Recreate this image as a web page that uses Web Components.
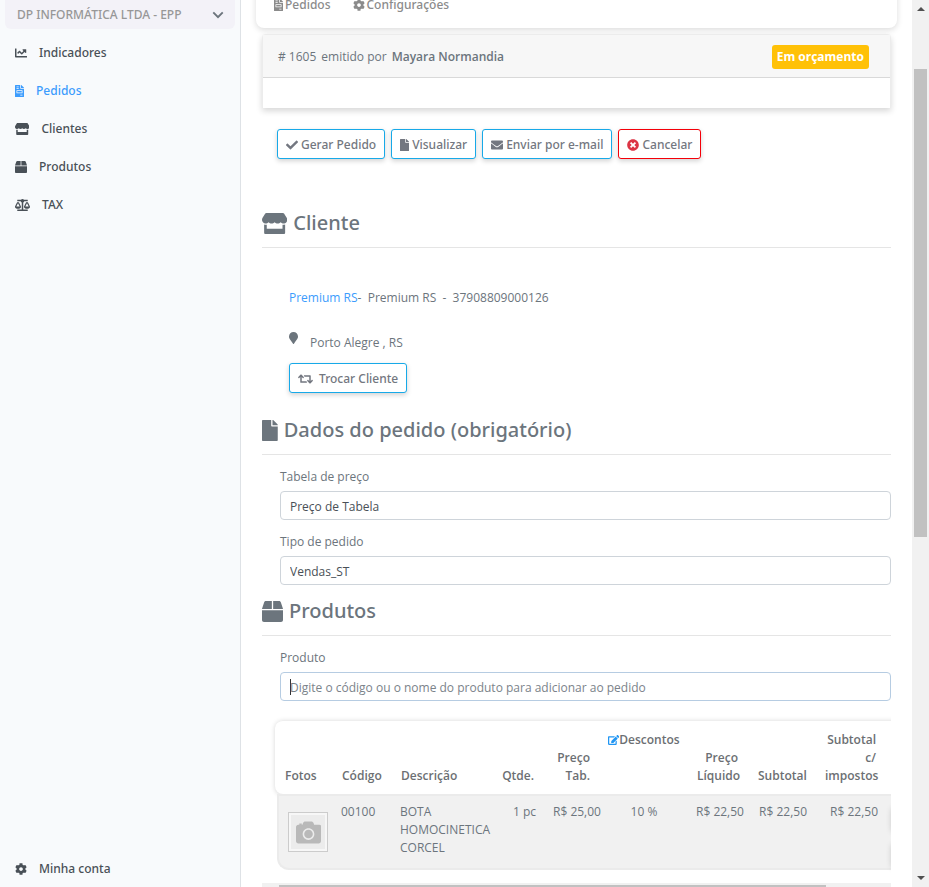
<!DOCTYPE html>
<html lang="pt-BR">
<head>
<meta charset="utf-8">
<meta name="viewport" content="width=device-width, initial-scale=1">
<title>Pedido 1605</title>
<style>
body { margin: 0; background: #fff; color: #6c757d; font: 12px/18px "Open Sans", "Noto Sans", sans-serif; --medium: "Noto Sans", "Open Sans", sans-serif; }
</style>
</head>
<body>
<order-app></order-app>
<script>
const define = (name, html, setup) => {
  const tpl = document.createElement('template');
  tpl.innerHTML = '<style>*,*::before{box-sizing:border-box}button,input{font-family:inherit}</style>' + html;
  customElements.define(name, class extends HTMLElement {
    constructor() {
      super();
      this.attachShadow({ mode: 'open' }).append(tpl.content.cloneNode(true));
    }
    connectedCallback() { if (setup) setup(this, this.shadowRoot); }
  });
};

const ICONS = {
  chart: [512, 'M496 384H64V80c0-8.84-7.16-16-16-16H16C7.16 64 0 71.16 0 80v336c0 17.67 14.33 32 32 32h464c8.84 0 16-7.16 16-16v-32c0-8.84-7.16-16-16-16zM464 96H345.94c-21.38 0-32.09 25.85-16.97 40.97l32.4 32.4L288 242.75l-73.37-73.37c-12.5-12.5-32.76-12.5-45.25 0l-68.69 68.69c-6.25 6.25-6.25 16.38 0 22.63l22.62 22.62c6.25 6.25 16.38 6.25 22.63 0L192 237.25l73.37 73.37c12.5 12.5 32.76 12.5 45.25 0l96-96 32.4 32.4c15.12 15.12 40.97 4.41 40.97-16.97V112c.01-8.84-7.15-16-15.99-16z'],
  invoice: [384, 'M288 256H96v64h192v-64zm89-151L279.1 7c-4.5-4.5-10.6-7-17-7H256v128h128v-6.1c0-6.3-2.5-12.4-7-16.9zm-153 31V0H24C10.7 0 0 10.7 0 24v464c0 13.3 10.7 24 24 24h336c13.3 0 24-10.7 24-24V160H248c-13.2 0-24-10.8-24-24zM64 72c0-4.42 3.58-8 8-8h80c4.42 0 8 3.58 8 8v16c0 4.42-3.58 8-8 8H72c-4.42 0-8-3.58-8-8V72zm0 64c0-4.42 3.58-8 8-8h80c4.42 0 8 3.58 8 8v16c0 4.42-3.58 8-8 8H72c-4.42 0-8-3.58-8-8v-16zm256 304c0 4.42-3.58 8-8 8h-80c-4.42 0-8-3.58-8-8v-16c0-4.42 3.58-8 8-8h80c4.42 0 8 3.58 8 8v16zm0-200v96c0 8.84-7.16 16-16 16H80c-8.84 0-16-7.16-16-16v-96c0-8.84 7.16-16 16-16h224c8.84 0 16 7.16 16 16z'],
  store: [616, 'M602 118.6L537.1 15C531.3 5.7 521 0 510 0H106C95 0 84.7 5.7 78.9 15L14 118.6c-33.5 53.5-3.8 127.9 58.8 136.4 4.5.6 9.1.9 13.7.9 29.6 0 55.8-13 73.8-33.1 18 20.1 44.3 33.1 73.8 33.1 29.6 0 55.8-13 73.8-33.1 18 20.1 44.3 33.1 73.8 33.1 29.6 0 55.8-13 73.8-33.1 18.1 20.1 44.3 33.1 73.8 33.1 4.7 0 9.2-.3 13.7-.9 62.8-8.4 92.6-82.8 59-136.4zM529.5 288c-10 0-19.9-1.5-29.5-3.8V384H116v-99.8c-9.6 2.2-19.5 3.8-29.5 3.8-6 0-12.1-.4-18-1.2-5.6-.8-11.1-2.1-16.4-3.6V480c0 17.7 14.3 32 32 32h448c17.7 0 32-14.3 32-32V283.2c-5.4 1.6-10.8 2.9-16.4 3.6-6.1.8-12.1 1.2-18.2 1.2z'],
  box: [512, 'M509.5 184.6L458.9 32.8C452.4 13.2 434.1 0 413.4 0H272v192h238.7c-.4-2.5-.4-5-1.2-7.4zM240 0H98.6c-20.7 0-39 13.2-45.5 32.8L2.5 184.6c-.8 2.4-.8 4.9-1.2 7.4H240V0zM0 224v240c0 26.5 21.5 48 48 48h416c26.5 0 48-21.5 48-48V224H0z'],
  scale: [640, 'M256 336h-.02c0-16.18 1.34-8.73-85.05-181.51-17.65-35.29-68.19-35.36-85.87 0C-2.06 328.75.02 320.33.02 336H0c0 44.18 57.31 80 128 80s128-35.82 128-80zM128 176l72 144H56l72-144zm511.98 160c0-16.18 1.34-8.73-85.05-181.51-17.65-35.29-68.19-35.36-85.87 0-87.12 174.26-85.04 165.84-85.04 181.51H384c0 44.18 57.31 80 128 80s128-35.82 128-80h-.02zM440 320l72-144 72 144H440zm88 128H352V153.25c23.51-10.29 41.16-31.48 46.39-57.25H528c8.84 0 16-7.16 16-16V48c0-8.84-7.16-16-16-16H383.64C369.04 12.68 346.09 0 320 0s-49.04 12.68-63.64 32H112c-8.84 0-16 7.16-16 16v32c0 8.84 7.16 16 16 16h129.61c5.23 25.76 22.87 46.96 46.39 57.25V448H112c-8.84 0-16 7.16-16 16v32c0 8.84 7.16 16 16 16h416c8.84 0 16-7.16 16-16v-32c0-8.84-7.16-16-16-16z'],
  cog: [512, 'M487.4 315.7l-42.6-24.6c4.3-23.2 4.3-47 0-70.2l42.6-24.6c4.9-2.8 7.1-8.6 5.5-14-11.1-35.6-30-67.8-54.7-94.6-3.8-4.1-10-5.1-14.8-2.3L380.8 110c-17.9-15.4-38.5-27.3-60.8-35.1V25.8c0-5.6-3.9-10.5-9.4-11.7-36.7-8.2-74.3-7.8-109.2 0-5.5 1.2-9.4 6.1-9.4 11.7V75c-22.2 7.9-42.8 19.8-60.8 35.1L88.7 85.5c-4.9-2.8-11-1.9-14.8 2.3-24.7 26.7-43.6 58.9-54.7 94.6-1.7 5.4.6 11.2 5.5 14L67.3 221c-4.3 23.2-4.3 47 0 70.2l-42.6 24.6c-4.9 2.8-7.1 8.6-5.5 14 11.1 35.6 30 67.8 54.7 94.6 3.8 4.1 10 5.1 14.8 2.3l42.6-24.6c17.9 15.4 38.5 27.3 60.8 35.1v49.2c0 5.6 3.9 10.5 9.4 11.7 36.7 8.2 74.3 7.8 109.2 0 5.5-1.2 9.4-6.1 9.4-11.7v-49.2c22.2-7.9 42.8-19.8 60.8-35.1l42.6 24.6c4.9 2.8 11 1.9 14.8-2.3 24.7-26.7 43.6-58.9 54.7-94.6 1.5-5.5-.7-11.3-5.6-14.1zM256 336c-44.1 0-80-35.9-80-80s35.9-80 80-80 80 35.9 80 80-35.9 80-80 80z'],
  check: [512, 'M173.9 439.4l-166.4-166.4c-10-10-10-26.2 0-36.2l36.2-36.2c10-10 26.2-10 36.2 0L192 312.7 432.1 72.6c10-10 26.2-10 36.2 0l36.2 36.2c10 10 10 26.2 0 36.2l-294.4 294.4c-10 10-26.2 10-36.2 0z'],
  file: [384, 'M224 136V0H24C10.7 0 0 10.7 0 24v464c0 13.3 10.7 24 24 24h336c13.3 0 24-10.7 24-24V160H248c-13.2 0-24-10.8-24-24zm160-14.1v6.1H256V0h6.1c6.4 0 12.5 2.5 17 7l97.9 98c4.5 4.5 7 10.6 7 16.9z'],
  envelope: [512, 'M502.3 190.8c3.9-3.1 9.7-.2 9.7 4.7V400c0 26.5-21.5 48-48 48H48c-26.5 0-48-21.5-48-48V195.6c0-5 5.7-7.8 9.7-4.7 22.4 17.4 52.1 39.5 154.1 113.6 21.1 15.4 56.7 47.8 92.2 47.6 35.7.3 72-32.8 92.3-47.6 102-74.1 131.6-96.3 154-113.7zM256 320c23.2.4 56.6-29.2 73.4-41.4 132.7-96.3 142.8-104.7 173.4-128.7 5.8-4.5 9.2-11.5 9.2-18.9v-19c0-26.5-21.5-48-48-48H48c-26.5 0-48 21.5-48 48v19c0 7.4 3.4 14.3 9.2 18.9 30.6 23.9 40.7 32.4 173.4 128.7 16.8 12.2 50.2 41.8 73.4 41.4z'],
  cancel: [512, 'M256 8C119 8 8 119 8 256s111 248 248 248 248-111 248-248S393 8 256 8zm121.6 313.1c4.7 4.7 4.7 12.3 0 17L338 377.6c-4.7 4.7-12.3 4.7-17 0L256 312l-65.1 65.6c-4.7 4.7-12.3 4.7-17 0L134.4 338c-4.7-4.7-4.7-12.3 0-17l65.6-65-65.6-65.1c-4.7-4.7-4.7-12.3 0-17l39.6-39.6c4.7-4.7 12.3-4.7 17 0l65 65.7 65.1-65.6c4.7-4.7 12.3-4.7 17 0l39.6 39.6c4.7 4.7 4.7 12.3 0 17L312 256l65.6 65.1z'],
  marker: [384, 'M172.3 501.7C27 291 0 269.4 0 192 0 86 86 0 192 0s192 86 192 192c0 77.4-27 99-172.3 309.7-9.5 13.8-29.9 13.8-39.4 0z'],
  retweet: [640, 'M629.657 343.598L528.971 444.284c-9.373 9.372-24.568 9.372-33.941 0L394.343 343.598c-9.373-9.373-9.373-24.569 0-33.941l10.823-10.823c9.562-9.562 25.133-9.34 34.419.492L480 342.118V160H292.451a24.005 24.005 0 0 1-16.971-7.029l-16-16C244.361 121.851 255.069 96 276.451 96H520c13.255 0 24 10.745 24 24v222.118l40.416-42.792c9.285-9.831 24.856-10.054 34.419-.492l10.823 10.823c9.372 9.372 9.372 24.569-.001 33.941zm-265.138 15.431A23.999 23.999 0 0 0 347.548 352H160V169.881l40.416 42.792c9.286 9.831 24.856 10.054 34.419.491l10.822-10.822c9.373-9.373 9.373-24.569 0-33.941L144.971 67.716c-9.373-9.373-24.569-9.373-33.941 0L10.343 168.402c-9.373 9.373-9.373 24.569 0 33.941l10.822 10.822c9.562 9.562 25.133 9.34 34.419-.491L96 169.881V392c0 13.255 10.745 24 24 24h243.549c21.382 0 32.09-25.851 16.971-40.971l-16.001-16z'],
  edit: [576, 'M402.6 83.2l90.2 90.2c3.8 3.8 3.8 10 0 13.8L274.4 405.6l-92.8 10.3c-12.4 1.4-22.9-9.1-21.5-21.5l10.3-92.8L388.8 83.2c3.8-3.8 10-3.8 13.8 0zm162-22.9l-48.8-48.8c-15.2-15.2-39.9-15.2-55.2 0l-35.4 35.4c-3.8 3.8-3.8 10 0 13.8l90.2 90.2c3.8 3.8 10 3.8 13.8 0l35.4-35.4c15.2-15.3 15.2-40 0-55.2zM384 346.2V448H64V128h229.8c3.2 0 6.2-1.3 8.5-3.5l40-40c7.6-7.6 2.2-20.5-8.5-20.5H48C21.5 64 0 85.5 0 112v352c0 26.5 21.5 48 48 48h352c26.5 0 48-21.5 48-48V306.2c0-10.7-12.9-16-20.5-8.5l-40 40c-2.2 2.3-3.5 5.3-3.5 8.5z'],
  down: [512, 'M256 404L26 174l56-56 174 174 174-174 56 56z'],
  camera: [512, 'M512 144v288c0 26.500-21.500 48-48 48H48c-26.500 0-48-21.500-48-48V144c0-26.500 21.500-48 48-48h20V70h50v26h14l12-33c7-19 25-31 45-31h125c20 0 38 12 45 31l12 33h105c26.500 0 48 21.500 48 48zM376 288c0-66-54-120-120-120s-120 54-120 120 54 120 120 120 120-54 120-120zm-32 0c0 48.500-39.500 88-88 88s-88-39.500-88-88 39.500-88 88-88 88 39.500 88 88z']
};

define('app-icon', `
<style>:host{display:inline-flex;flex:none;height:var(--icon-size,12px)}svg{display:block;height:100%;fill:currentColor}</style>
<svg aria-hidden="true"><path/></svg>`, (el, root) => {
  const [w, d] = ICONS[el.getAttribute('name')];
  root.querySelector('svg').setAttribute('viewBox', `0 0 ${w} 512`);
  root.querySelector('svg').style.aspectRatio = w + '/512';
  root.querySelector('path').setAttribute('d', d);
});

define('side-link', `
<style>
:host{display:block;--icon-size:12px}
a{display:flex;align-items:center;gap:12px;padding:9px 15px;color:#495057;font-family:var(--medium);font-size:12px;line-height:20px;font-weight:500;text-decoration:none}
:host([active]) a{color:#3c9cfd}
</style>
<a href="#"><slot></slot></a>`, (el, root) => {
  const icon = document.createElement('app-icon');
  icon.setAttribute('name', el.getAttribute('icon'));
  root.querySelector('a').prepend(icon);
});

define('side-bar', `
<style>
:host{display:flex;flex-direction:column;flex:none;width:241px;background:#f8fafc;border-right:1px solid #dee2e6}
.company{display:flex;justify-content:space-between;align-items:center;margin:0 5px 5px;padding:0 11px 0 12px;height:29px;border:0;border-radius:0 0 6px 6px;background:#f3f2f8;color:#979797;font-family:var(--medium);font-size:12px;line-height:18px;font-weight:500}
.company app-icon{color:#6c757d}
nav{flex:1;display:flex;flex-direction:column}
.account{margin-top:auto;margin-bottom:-1px}
</style>
<button class="company">DP INFORMÁTICA LTDA - EPP<app-icon name="down"></app-icon></button>
<nav>
<side-link icon="chart">Indicadores</side-link>
<side-link icon="invoice" active>Pedidos</side-link>
<side-link icon="store">Clientes</side-link>
<side-link icon="box">Produtos</side-link>
<side-link icon="scale">TAX</side-link>
<side-link class="account" icon="cog">Minha conta</side-link>
</nav>`);

define('top-tabs', `
<style>
:host{display:flex;gap:22px;margin:0 -6px;padding:23px 18px 17px;background:#fff;border-radius:8px;box-shadow:0 2px 6px rgba(0,0,0,.14)}
a{display:flex;align-items:center;gap:2px;color:#8b8b8b;font-family:var(--medium);line-height:12px;font-weight:500;text-decoration:none}
</style>
<a href="#"><app-icon name="invoice"></app-icon>Pedidos</a>
<a href="#"><app-icon name="cog"></app-icon>Configurações</a>`);

define('order-card', `
<style>
:host{display:block;margin-top:6px;border:1px solid #ececec;border-bottom:0;border-radius:4px 4px 0 0;box-shadow:0 3px 6px rgba(0,0,0,.16)}
header{display:flex;align-items:center;gap:5px;height:43px;padding:1px 21px 0 15px;background:#f7f7f7;border-bottom:1px solid #d9d9d9}
.badge{margin-left:auto;padding:3px 5px;border-radius:3px;background:#ffc107;color:#fff;font-weight:700}
.body{height:30px}
b{font-weight:600}
</style>
<header><span># 1605</span><span>emitido por</span><b>Mayara Normandia</b><span class="badge">Em orçamento</span></header>
<div class="body"></div>`);

define('action-button', `
<style>
:host{display:inline-flex}
button{display:flex;align-items:center;gap:var(--button-gap,3px);height:30px;padding:1px 8px 0;border:1px solid #17a9e8;border-radius:3px;background:#fff;color:#737780;font-family:var(--medium);font-size:12px;line-height:18px;font-weight:500;white-space:nowrap;box-shadow:0 2px 5px rgba(0,0,0,.18)}
:host([danger]) button{border-color:#f40009}
</style>
<button><slot name="icon"></slot><slot></slot></button>`);

define('section-title', `
<style>
:host{display:block;border-bottom:1px solid #e5e5e5;--icon-size:21px}
h2{display:flex;align-items:center;gap:6px;margin:0;padding-bottom:10px;font-family:var(--medium);font-size:20px;line-height:28px;font-weight:500}
</style>
<h2><slot name="icon"></slot><slot></slot></h2>`);

define('form-field', `
<style>
:host{display:block;padding-left:18px}
label{display:block;margin-bottom:5px}
input{display:block;width:100%;height:29px;padding:2px 9px 0;border:1px solid #ced4da;border-radius:4px;background:#fff;color:#495057;font-size:12px;line-height:18px}
input::placeholder{color:#7b838a;opacity:1}
:host([active]) input{border-color:#b6cce2;background:linear-gradient(#333,#333) 9px center/1px 16px no-repeat #fff}
</style>
<label for="field"></label><input id="field" type="text">`, (el, root) => {
  root.querySelector('label').textContent = el.getAttribute('label');
  const input = root.querySelector('input');
  input.value = el.getAttribute('value') || '';
  input.placeholder = el.getAttribute('placeholder') || '';
});

define('client-info', `
<style>
:host{display:flex;flex-direction:column;align-items:flex-start;padding:41px 0 0 27px}
p{margin:0}
.name{white-space:pre}
a{color:#3c9cfd;text-decoration:none}
.place{display:flex;gap:12px;padding:25px 0 11px}
.place span{padding-top:2px}
</style>
<p class="name"><a href="#">Premium RS</a>-&nbsp; Premium RS&nbsp; -&nbsp; 37908809000126</p>
<p class="place"><app-icon name="marker"></app-icon><span>Porto Alegre , RS</span></p>
<action-button style="--button-gap:6px"><app-icon slot="icon" name="retweet"></app-icon>Trocar Cliente</action-button>`);

define('product-table', `
<style>
:host{display:block;margin:15px 0 0 3px;padding:4px 0 9px 10px;overflow:hidden}
table{width:calc(100% + 35px);table-layout:fixed;border-collapse:separate;border-spacing:0}
thead{border-radius:8px 0 0 8px;box-shadow:0 1px 5px rgba(0,0,0,.16)}
th{padding:10px 10px 9px;vertical-align:bottom;font-weight:600;text-align:left;color:#6c6f73;border-top:1px solid #eee;white-space:nowrap}
th:first-child{border-radius:8px 0 0 8px}
.n{text-align:right}
.d{text-align:center}
th.d{vertical-align:top;padding-left:8px}
th.d span{display:flex;align-items:center;--icon-size:10px}
th.d app-icon{color:#2196f3}
td{height:76px;padding:7px 8px 0 9px;vertical-align:top;background:#f1f1f1;border:solid #ebebeb;border-width:2px 0;white-space:nowrap}
td:first-child{position:relative;background:none;border:0}
td:first-child::before{content:"";position:absolute;inset:0 0 0 2px;background:#f1f1f1;border:2px solid #ebebeb;border-right:0;border-radius:0 0 0 12px}
td.wrap{white-space:normal}
.photo{position:relative;display:flex;align-items:center;justify-content:center;width:40px;height:40px;margin:11px 0 0 4px;border:1px solid #ccc;box-shadow:inset 0 0 0 2px #f7f7f7;background:#ececec;color:#b9b9b9;--icon-size:25px}
td.tools{padding:10px 0 0 6px}
.tools button{display:block;width:24px;height:24px;border:0;border-radius:3px;background:#fff;box-shadow:0 2px 6px rgba(0,0,0,.2)}
.tools button + button{margin-top:12px}
</style>
<table>
<colgroup><col style="width:57px"><col style="width:59px"><col><col style="width:52px"><col style="width:56px"><col style="width:87px"><col style="width:61px"><col style="width:67px"><col style="width:71px"><col style="width:40px"></colgroup>
<thead><tr><th>Fotos</th><th>Código</th><th>Descrição</th><th class="n">Qtde.</th><th class="n">Preço<br>Tab.</th><th class="d"><span><app-icon name="edit"></app-icon>Descontos</span></th><th class="n">Preço<br>Líquido</th><th class="n">Subtotal</th><th class="n">Subtotal<br>c/<br>impostos</th><th></th></tr></thead>
<tbody><tr><td><div class="photo"><app-icon name="camera"></app-icon></div></td><td>00100</td><td class="wrap">BOTA HOMOCINETICA CORCEL</td><td class="n">1 pc</td><td class="n">R$ 25,00</td><td class="d">10 %</td><td class="n">R$ 22,50</td><td class="n">R$ 22,50</td><td class="n">R$ 22,50</td><td class="tools"><button aria-label="Editar"></button><button aria-label="Remover"></button></td></tr></tbody>
</table>`);

define('h-scroll', `
<style>:host{display:block;height:17px;margin-top:4px;padding:2px 17px;background:#f1f1f1}div{width:92%;height:13px;background:#c1c1c1}</style><div></div>`);

define('page-scroll', `
<style>
:host{display:flex;flex-direction:column;align-items:center;flex:none;width:17px;padding:7px 2px;background:#f1f1f1}
i{border:4px solid transparent;border-top:0;border-bottom-color:#505050}
i.down{border:4px solid transparent;border-bottom:0;border-top-color:#505050;margin-top:auto}
.track{width:13px;height:calc(53% + 5px);margin-top:58px;background:#c1c1c1}
</style><i></i><div class="track"></div><i class="down"></i>`);

define('order-app', `
<style>
:host{display:flex;height:100vh;overflow:hidden}
main{flex:1;min-width:0;padding:0 21px;overflow:hidden;position:relative;z-index:0}
top-tabs{margin-top:-24px}
.actions{display:flex;gap:6px;padding:21px 15px 50px}
.s2{margin-top:23px}
.s3{margin-top:12px}
form-field{margin-top:13px}
</style>
<side-bar></side-bar>
<main>
<top-tabs></top-tabs>
<order-card></order-card>
<div class="actions">
<action-button><app-icon slot="icon" name="check"></app-icon>Gerar Pedido</action-button>
<action-button><app-icon slot="icon" name="file"></app-icon>Visualizar</action-button>
<action-button><app-icon slot="icon" name="envelope"></app-icon>Enviar por e-mail</action-button>
<action-button danger><app-icon slot="icon" name="cancel" style="color:#dc3545"></app-icon>Cancelar</action-button>
</div>
<section-title><app-icon slot="icon" name="store"></app-icon>Cliente</section-title>
<client-info></client-info>
<section-title class="s2"><app-icon slot="icon" name="file"></app-icon>Dados do pedido (obrigatório)</section-title>
<form-field label="Tabela de preço" value="Preço de Tabela"></form-field>
<form-field label="Tipo de pedido" value="Vendas_ST"></form-field>
<section-title class="s3"><app-icon slot="icon" name="box"></app-icon>Produtos</section-title>
<form-field active label="Produto" placeholder="Digite o código ou o nome do produto para adicionar ao pedido"></form-field>
<product-table></product-table>
<h-scroll></h-scroll>
</main>
<page-scroll></page-scroll>`);
</script>
</body>
</html>
